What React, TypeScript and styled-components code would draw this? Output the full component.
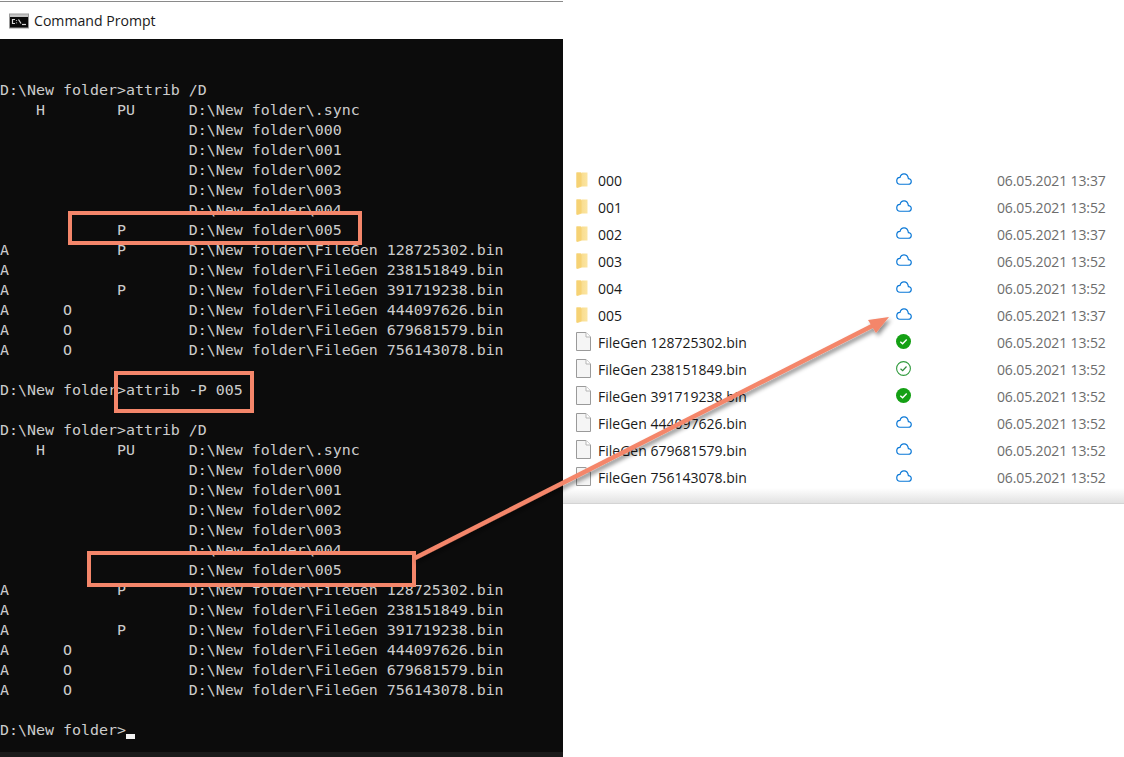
import React from "react";
import styled, { createGlobalStyle } from "styled-components";

const Global = createGlobalStyle`
  html, body { margin: 0; padding: 0; background: #fff; }
  body { width: 1124px; height: 757px; overflow: hidden; }
`;

const Page = styled.div`
  position: relative;
  display: flex;
  width: 1124px;
  height: 757px;
  overflow: hidden;
  background: #fff;
`;

const Console = styled.section`
  display: flex;
  flex-direction: column;
  width: 563px;
  height: 757px;
  flex: none;
`;

const TitleBar = styled.header`
  display: flex;
  align-items: center;
  gap: 5px;
  height: 38px;
  padding-left: 9px;
  box-sizing: border-box;
  margin-top: 1px;
  border-top: 1px solid #8a8a8a;
  background: #fff;
  font-family: "Open Sans", sans-serif;
  font-size: 14.1px;
  color: #1a1a1a;
`;

const Terminal = styled.pre`
  flex: 1;
  min-height: 0;
  box-sizing: border-box;
  margin: 0;
  padding-top: 41px;
  background: #0c0c0c;
  color: #cccccc;
  font-family: "DejaVu Sans Mono", monospace;
  font-size: 14.95px;
  line-height: 20px;
  white-space: pre;
  border-bottom: 5px solid #1b1b1b;
`;

const Line = styled.div`
  height: 20px;
`;

const Cursor = styled.span`
  display: inline-block;
  width: 9px;
  height: 5px;
  background: #f2f2f2;
  vertical-align: -4px;
`;

const Explorer = styled.section`
  flex: 1;
  height: 504px;
  box-sizing: border-box;
  padding-top: 166px;
  border-bottom: 1px solid #d4d4d4;
  background: linear-gradient(to bottom, #fff 0, #fff 488px, #e2e2e2 503px);
`;

const Row = styled.div`
  display: grid;
  grid-template-columns: 22px 298px 101px auto;
  align-items: center;
  height: 27px;
  padding-left: 13px;
  font-family: "Open Sans", sans-serif;
  font-size: 14px;
  color: #1a1a1a;
`;

const Name = styled.span`
  padding-top: 2px;
  white-space: pre;
`;

const Modified = styled.span`
  padding-top: 2px;
  color: #6d6d6d;
  letter-spacing: -0.13px;
  white-space: pre;
`;

const IconCell = styled.span`
  display: flex;
  align-items: center;
  height: 27px;
`;

const CloudGlyph = styled.svg`
  margin-bottom: 2px;
`;

const Highlight = styled.div<{ $x: number; $y: number; $w: number; $h: number }>`
  position: absolute;
  left: ${(p) => p.$x}px;
  top: ${(p) => p.$y}px;
  width: ${(p) => p.$w}px;
  height: ${(p) => p.$h}px;
  box-sizing: border-box;
  border: 4px solid #f4866a;
`;

const ArrowLayer = styled.svg`
  position: absolute;
  left: 0;
  top: 0;
  pointer-events: none;
`;

const CmdIcon = () => (
  <svg width="20" height="16" viewBox="0 0 20 16">
    <rect x="0" y="0.5" width="20" height="15" fill="#9a9a9a" />
    <rect x="1" y="1.5" width="18" height="2.5" fill="#c4c4c4" />
    <rect x="1" y="4" width="18" height="10.5" fill="#0a0a0a" />
    <path d="M6 6.5H3.5V10.5H6" stroke="#d8d8d8" strokeWidth="1.2" fill="none" />
    <path d="M7.5 7v.8M7.5 9.5v.8" stroke="#d8d8d8" strokeWidth="1.2" fill="none" />
    <path d="M9.5 6.5L12 10.5" stroke="#d8d8d8" strokeWidth="1.2" fill="none" />
    <path d="M13 11.5H17" stroke="#d8d8d8" strokeWidth="1.2" fill="none" />
  </svg>
);

const FolderIcon = () => (
  <svg width="12" height="18" viewBox="0 0 12 18">
    <defs>
      <linearGradient id="fold" x1="0" x2="1" y1="0" y2="0">
        <stop offset="0" stopColor="#f7d67e" />
        <stop offset="1" stopColor="#fbe5a3" />
      </linearGradient>
    </defs>
    <path d="M0.5 1.5H4.5L6 2.5V1.5H11.5V15.5L6 15.5L1.5 17L0.5 16Z" fill="url(#fold)" />
    <path d="M0.5 1.5H5.5V15L0.5 16.8Z" fill="#f6d274" />
  </svg>
);

const FileIcon = () => (
  <svg width="15" height="19" viewBox="0 0 15 19">
    <path d="M0.5 0.5H10L14.5 5V18.5H0.5Z" fill="#f5f5f5" stroke="#9a9a9a" />
    <path d="M10 0.5V5H14.5" fill="#fff" stroke="#b5b5b5" />
  </svg>
);

const CloudIcon = () => (
  <CloudGlyph width="16" height="12" viewBox="0 0 16 12">
    <path
      d="M4 11.25H12.3C14 11.25 15.25 10 15.25 8.4C15.25 6.8 14 5.6 12.4 5.6C12 3 10.3 0.9 8 0.9C6 0.9 4.5 2.3 4 4.3C2.1 4.4 0.75 5.9 0.75 7.8C0.75 9.7 2.1 11.25 4 11.25Z"
      fill="#fff"
      stroke="#0a78d7"
      strokeWidth="1.2"
    />
  </CloudGlyph>
);

const PinnedIcon = () => (
  <svg width="15" height="15" viewBox="0 0 15 15">
    <circle cx="7.5" cy="7.5" r="7.5" fill="#14a014" />
    <path d="M4.3 7.7L6.6 9.8L10.7 5.4" stroke="#fff" strokeWidth="1.4" fill="none" />
  </svg>
);

const LocalIcon = () => (
  <svg width="15" height="15" viewBox="0 0 15 15">
    <circle cx="7.5" cy="7.5" r="6.9" fill="#fff" stroke="#2f9a3c" strokeWidth="1.1" />
    <path d="M4.5 7.7L6.7 9.7L10.5 5.5" stroke="#2f8a3c" strokeWidth="1.2" fill="none" />
  </svg>
);

const P = "D:\\New folder\\";

const listing = (pin: boolean) => [
  `    H        PU      ${P}.sync`,
  `                     ${P}000`,
  `                     ${P}001`,
  `                     ${P}002`,
  `                     ${P}003`,
  `                     ${P}004`,
  `             ${pin ? "P" : " "}       ${P}005`,
  `A            P       ${P}FileGen 128725302.bin`,
  `A                    ${P}FileGen 238151849.bin`,
  `A            P       ${P}FileGen 391719238.bin`,
  `A      O             ${P}FileGen 444097626.bin`,
  `A      O             ${P}FileGen 679681579.bin`,
  `A      O             ${P}FileGen 756143078.bin`,
];

const lines = [
  "D:\\New folder>attrib /D",
  ...listing(true),
  "",
  "D:\\New folder>attrib -P 005",
  "",
  "D:\\New folder>attrib /D",
  ...listing(false),
  "",
];

type Status = "cloud" | "pinned" | "local";
const rows: { name: string; kind: "folder" | "file"; status: Status; date: string }[] = [
  { name: "000", kind: "folder", status: "cloud", date: "06.05.2021 13:37" },
  { name: "001", kind: "folder", status: "cloud", date: "06.05.2021 13:52" },
  { name: "002", kind: "folder", status: "cloud", date: "06.05.2021 13:37" },
  { name: "003", kind: "folder", status: "cloud", date: "06.05.2021 13:52" },
  { name: "004", kind: "folder", status: "cloud", date: "06.05.2021 13:52" },
  { name: "005", kind: "folder", status: "cloud", date: "06.05.2021 13:37" },
  { name: "FileGen 128725302.bin", kind: "file", status: "pinned", date: "06.05.2021 13:52" },
  { name: "FileGen 238151849.bin", kind: "file", status: "local", date: "06.05.2021 13:52" },
  { name: "FileGen 391719238.bin", kind: "file", status: "pinned", date: "06.05.2021 13:52" },
  { name: "FileGen 444097626.bin", kind: "file", status: "cloud", date: "06.05.2021 13:52" },
  { name: "FileGen 679681579.bin", kind: "file", status: "cloud", date: "06.05.2021 13:52" },
  { name: "FileGen 756143078.bin", kind: "file", status: "cloud", date: "06.05.2021 13:52" },
];

const statusIcon = (s: Status) =>
  s === "cloud" ? <CloudIcon /> : s === "pinned" ? <PinnedIcon /> : <LocalIcon />;

export default function App() {
  return (
    <Page>
      <Global />
      <Console>
        <TitleBar>
          <CmdIcon />
          Command Prompt
        </TitleBar>
        <Terminal>
          {lines.map((l, i) => (
            <Line key={i}>{l}</Line>
          ))}
          <Line>
            {"D:\\New folder>"}
            <Cursor />
          </Line>
        </Terminal>
      </Console>
      <Explorer>
        {rows.map((r) => (
          <Row key={r.name}>
            <IconCell>{r.kind === "folder" ? <FolderIcon /> : <FileIcon />}</IconCell>
            <Name>{r.name}</Name>
            <IconCell>{statusIcon(r.status)}</IconCell>
            <Modified>{r.date}</Modified>
          </Row>
        ))}
      </Explorer>
      <Highlight $x={68} $y={211} $w={294} $h={34} />
      <Highlight $x={114} $y={371} $w={140} $h={42} />
      <Highlight $x={87} $y={551} $w={329} $h={36} />
      <ArrowLayer width="1124" height="757" viewBox="0 0 1124 757">
        <defs>
          <filter id="shadow" x="-10%" y="-10%" width="120%" height="130%">
            <feDropShadow dx="2" dy="3" stdDeviation="2" floodColor="#000" floodOpacity="0.45" />
          </filter>
        </defs>
        <g filter="url(#shadow)">
          <path d="M415 558L876 324" stroke="#f4866a" strokeWidth="4.5" fill="none" />
          <path d="M889 317L868 320L876 333Z" fill="#f4866a" />
        </g>
      </ArrowLayer>
    </Page>
  );
}
